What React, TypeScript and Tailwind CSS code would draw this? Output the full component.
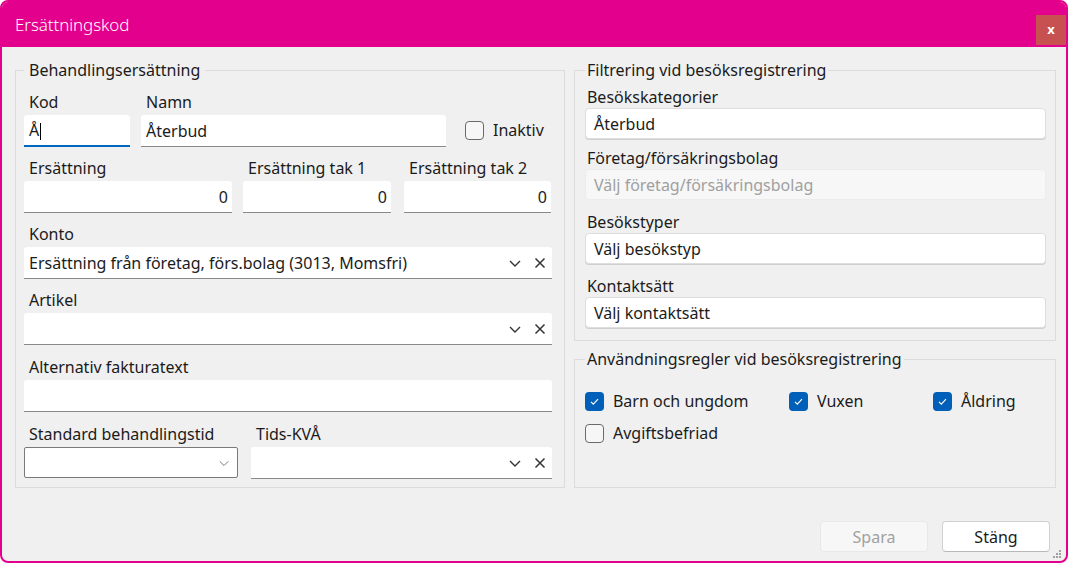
import React from "react";

const font = { fontFamily: '"Noto Sans", "Open Sans", sans-serif' };

function Chevron({ size = 14, stroke = 1.4 }: { size?: number; stroke?: number }) {
  return (
    <svg width={size} height={size} viewBox="0 0 14 14" fill="none">
      <path d="M2 5l5 5 5-5" stroke="currentColor" strokeWidth={stroke} />
    </svg>
  );
}

function XMark() {
  return (
    <svg width="14" height="14" viewBox="0 0 14 14" fill="none">
      <path d="M2.5 2.5l9 9M11.5 2.5l-9 9" stroke="currentColor" strokeWidth="1.5" />
    </svg>
  );
}

function Label({ children, right = false }: { children: React.ReactNode; right?: boolean }) {
  return (
    <div
      className={
        "h-5 leading-5 text-[16px] text-[#1b1b1b] whitespace-nowrap " + (right ? "pl-[2px]" : "pl-[5px]")
      }
    >
      {children}
    </div>
  );
}

function TextBox({
  children,
  align = "left",
  focused = false,
  combo = false,
}: {
  children?: React.ReactNode;
  align?: "left" | "right";
  focused?: boolean;
  combo?: boolean;
}) {
  return (
    <div
      className={
        "mt-[3px] h-[32px] bg-white rounded-t-[3px] flex items-center text-[16px] text-[#1b1b1b] whitespace-nowrap " +
        (focused ? "border-b-2 border-[#0067c0]" : "border-b border-[#8a8a8a]")
      }
    >
      <div className={"flex-1 px-[5px] " + (align === "right" ? "text-right pr-[4px]" : "")}>{children}</div>
      {combo && (
        <div className="flex items-center gap-[11px] pr-[5px] text-[#333333]">
          <Chevron />
          <XMark />
        </div>
      )}
    </div>
  );
}

function RoundBox({ children, disabled = false }: { children: React.ReactNode; disabled?: boolean }) {
  return (
    <div
      className={
        "mt-[1px] h-[31px] rounded-[4px] border flex items-center px-[8px] text-[16px] " +
        (disabled
          ? "bg-[#f7f7f7] border-[#ececec] text-[#a0a0a0]"
          : "bg-white border-[#dedede] text-[#1b1b1b] shadow-[0_1px_0_#d0d0d0]")
      }
    >
      {children}
    </div>
  );
}

function Check({ checked, label }: { checked: boolean; label: string }) {
  return (
    <div className="flex items-center gap-[9px] text-[16px] text-[#1b1b1b] whitespace-nowrap">
      {checked ? (
        <div className="w-[19px] h-[19px] rounded-[4px] bg-[#005fb8] flex items-center justify-center">
          <svg width="11" height="11" viewBox="0 0 11 11" fill="none">
            <path d="M2 5.8l2.3 2.3L9 3.2" stroke="white" strokeWidth="1.2" />
          </svg>
        </div>
      ) : (
        <div className="w-[19px] h-[19px] rounded-[4px] border border-[#6a6a6a] bg-[#f6f6f6]" />
      )}
      <span>{label}</span>
    </div>
  );
}

export default function App() {
  return (
    <div className="w-[1070px] h-[564px] bg-white" style={font}>
      <div className="w-[1068px] h-[563px] border-2 border-[#e3008c] rounded-[8px] overflow-hidden flex flex-col bg-[#f0f0f0]">
        {/* Title bar */}
        <div className="h-[45px] bg-[#e3008c] flex items-center justify-between pl-[13px] pr-0">
          <span className="text-white text-[17px] font-light tracking-[-0.1px]">Ersättningskod</span>
          <div className="w-[30px] h-[30px] mt-[10px] bg-[#c75050] flex items-center justify-center">
            <span className="text-white text-[13px] font-bold leading-none">x</span>
          </div>
        </div>

        {/* Body */}
        <div className="flex-1 flex flex-col pl-[13px] pr-[10px] pt-[13px]">
          <div className="flex gap-[9px]">
            {/* Left group */}
            <fieldset className="w-[551px] h-[428px] border border-[#dcdcdc] pl-[8px] pr-[12px]">
              <legend className="ml-0 px-[5px] text-[16px] leading-5 text-[#1b1b1b]">Behandlingsersättning</legend>

              <div className="flex items-start mt-[12px]">
                <div className="w-[106px]">
                  <Label>Kod</Label>
                  <TextBox focused>
                    <span>Å</span>
                    <span className="inline-block w-px h-[17px] bg-black align-middle ml-[1px]" />
                  </TextBox>
                </div>
                <div className="w-[305px] ml-[11px]">
                  <Label>Namn</Label>
                  <TextBox>Återbud</TextBox>
                </div>
                <div className="ml-[19px] mt-[26px]">
                  <Check checked={false} label="Inaktiv" />
                </div>
              </div>

              <div className="flex items-start mt-[11px]">
                <div className="w-[208px]">
                  <Label>Ersättning</Label>
                  <TextBox align="right">0</TextBox>
                </div>
                <div className="w-[148px] ml-[11px]">
                  <Label>Ersättning tak 1</Label>
                  <TextBox align="right">0</TextBox>
                </div>
                <div className="w-[147px] ml-[13px]">
                  <Label>Ersättning tak 2</Label>
                  <TextBox align="right">0</TextBox>
                </div>
              </div>

              <div className="mt-[11px]">
                <Label>Konto</Label>
                <TextBox combo>Ersättning från företag, förs.bolag (3013, Momsfri)</TextBox>
              </div>

              <div className="mt-[11px]">
                <Label>Artikel</Label>
                <TextBox combo />
              </div>

              <div className="mt-[12px]">
                <Label>Alternativ fakturatext</Label>
                <TextBox />
              </div>

              <div className="flex items-start mt-[12px]">
                <div className="w-[214px]">
                  <Label>Standard behandlingstid</Label>
                  <div className="mt-[3px] h-[31px] bg-white border border-[#7a7a7a] rounded-[2px] flex items-center justify-end pr-[7px] text-[#707070]">
                    <Chevron size={12} stroke={1.1} />
                  </div>
                </div>
                <div className="flex-1 ml-[13px]">
                  <Label>Tids-KVÅ</Label>
                  <TextBox combo />
                </div>
              </div>
            </fieldset>

            {/* Right column */}
            <div className="w-[483px] flex flex-col">
              <fieldset className="h-[281px] border border-[#dcdcdc] pl-[10px] pr-[9px]">
                <legend className="ml-0 px-[2px] text-[16px] leading-5 text-[#1b1b1b]">Filtrering vid besöksregistrering</legend>
                <div className="mt-[7px]">
                  <Label right>Besökskategorier</Label>
                  <RoundBox>Återbud</RoundBox>
                </div>
                <div className="mt-[9px]">
                  <Label right>Företag/försäkringsbolag</Label>
                  <RoundBox disabled>Välj företag/försäkringsbolag</RoundBox>
                </div>
                <div className="mt-[12px]">
                  <Label right>Besökstyper</Label>
                  <RoundBox>Välj besökstyp</RoundBox>
                </div>
                <div className="mt-[12px]">
                  <Label right>Kontaktsätt</Label>
                  <RoundBox>Välj kontaktsätt</RoundBox>
                </div>
              </fieldset>

              <fieldset className="mt-[8px] h-[139px] border border-[#dcdcdc] pl-[10px]">
                <legend className="ml-0 px-[2px] text-[16px] leading-5 text-[#1b1b1b]">Användningsregler vid besöksregistrering</legend>
                <div className="mt-[20px] flex">
                  <div className="w-[204px]">
                    <Check checked label="Barn och ungdom" />
                  </div>
                  <div className="w-[144px]">
                    <Check checked label="Vuxen" />
                  </div>
                  <div>
                    <Check checked label="Åldring" />
                  </div>
                </div>
                <div className="mt-[8px]">
                  <Check checked={false} label="Avgiftsbefriad" />
                </div>
              </fieldset>
            </div>
          </div>

          {/* Buttons */}
          <div className="mt-auto mb-[9px] flex justify-end items-end gap-[14px] pr-[6px] relative">
            <button className="w-[108px] h-[31px] rounded-[4px] bg-[#f7f7f7] border border-[#e8e8e8] text-[16px] text-[#a0a0a0]">
              Spara
            </button>
            <button className="w-[108px] h-[31px] rounded-[4px] bg-white border border-[#d0d0d0] border-b-[#b8b8b8] text-[16px] text-[#1b1b1b]">
              Stäng
            </button>
            <svg className="absolute right-[-6px] bottom-[-7px]" width="10" height="10" viewBox="0 0 10 10">
              <rect x="7" y="1" width="2" height="2" fill="#a0a0a0" />
              <rect x="4" y="4" width="2" height="2" fill="#a0a0a0" />
              <rect x="7" y="4" width="2" height="2" fill="#a0a0a0" />
              <rect x="1" y="7" width="2" height="2" fill="#a0a0a0" />
              <rect x="4" y="7" width="2" height="2" fill="#a0a0a0" />
              <rect x="7" y="7" width="2" height="2" fill="#a0a0a0" />
            </svg>
          </div>
        </div>
      </div>
    </div>
  );
}
